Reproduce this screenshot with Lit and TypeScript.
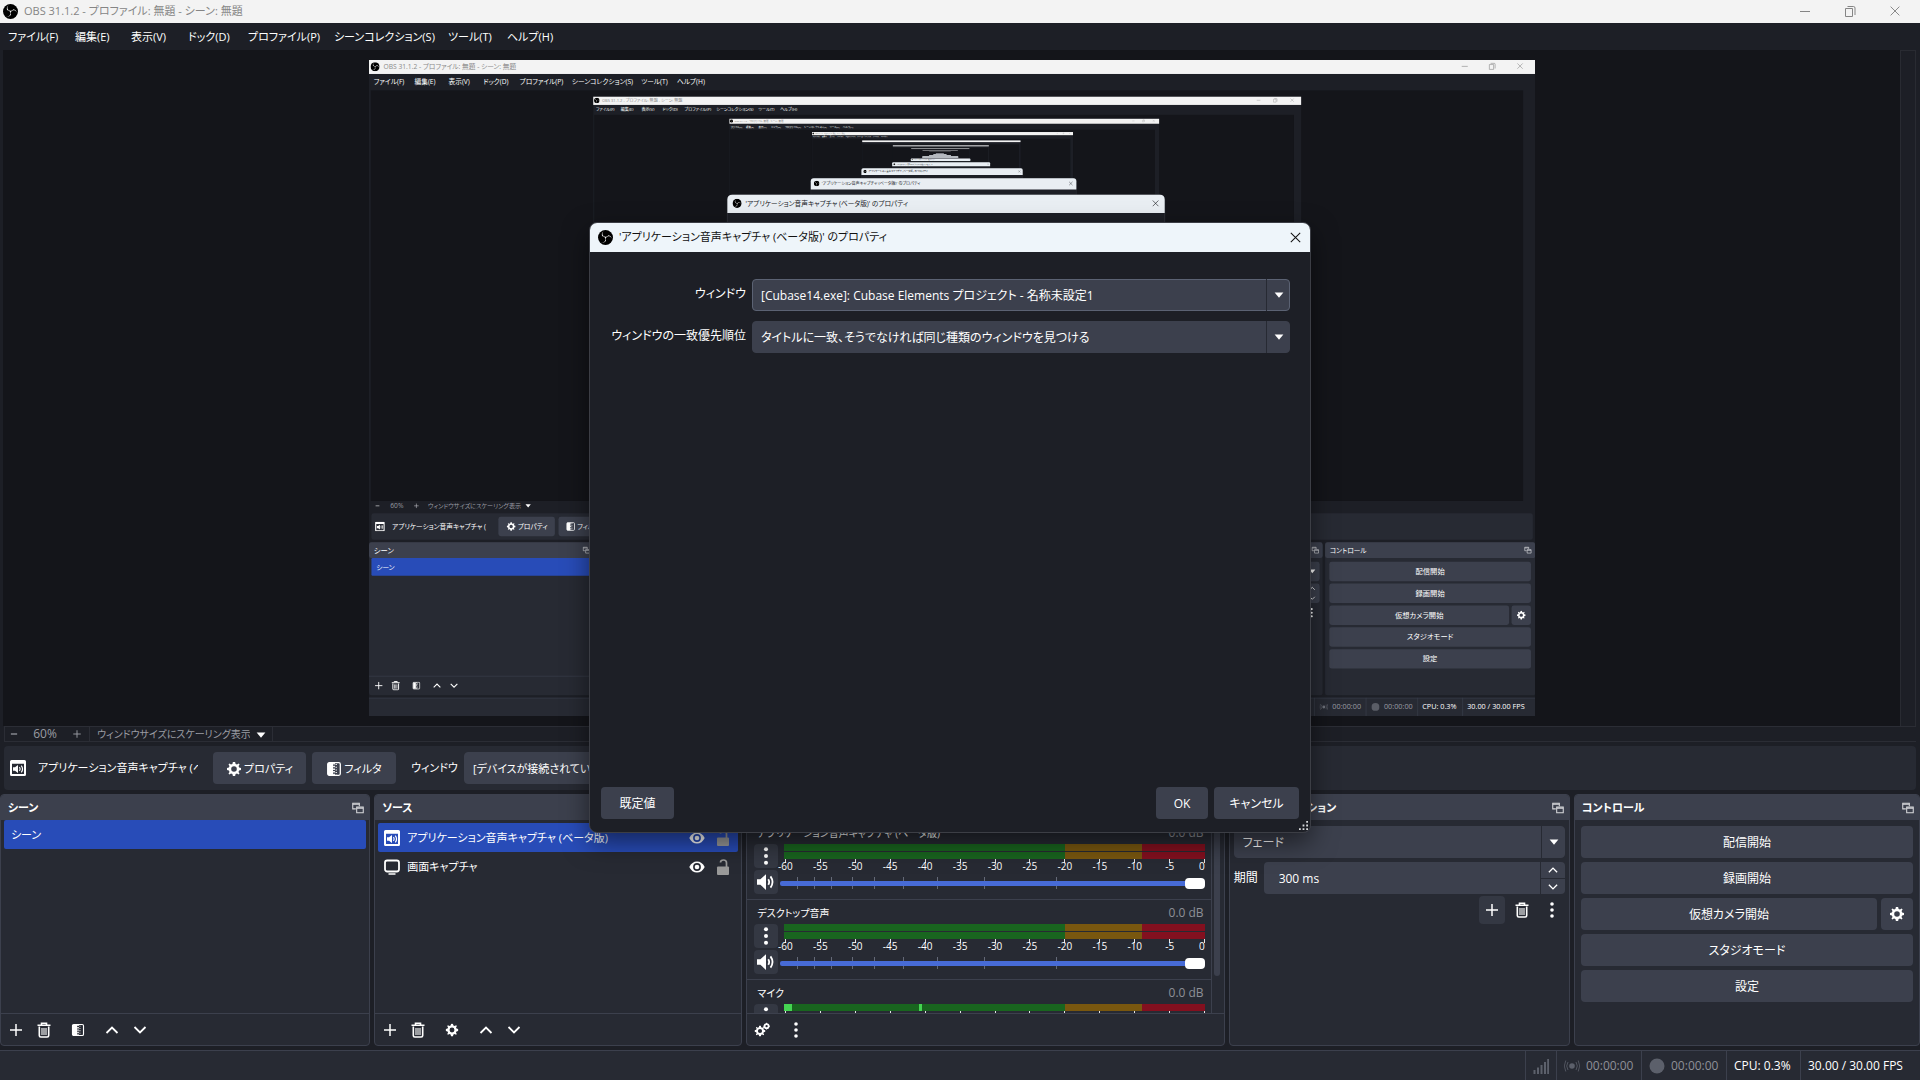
import { LitElement, html, svg, css, nothing } from "lit";
import { customElement, property } from "lit/decorators.js";

const APP_TITLE = "OBS 31.1.2 - プロファイル: 無題 - シーン: 無題";
const DIALOG_TITLE = "'アプリケーション音声キャプチャ (ベータ版)' のプロパティ";
const SOURCE_NAME = "アプリケーション音声キャプチャ (ベータ版)";

/** Menu labels, with the x position and width each one has on the bar. */
const MENUS: [string, number, number][] = [
  ["ファイル(F)", 8, 67],
  ["編集(E)", 75, 56],
  ["表示(V)", 131, 57],
  ["ドック(D)", 188, 60],
  ["プロファイル(P)", 248, 86],
  ["シーンコレクション(S)", 334, 114],
  ["ツール(T)", 448, 59],
  ["ヘルプ(H)", 507, 60],
];

const GEAR =
  "M8 0.9 9.1 1 9.6 2.9 11 3.5 12.7 2.5 13.6 3.4 12.6 5.1 13.1 6.4 15 6.9 15 9.1 13.1 9.6 12.5 11 13.5 12.6 12.6 13.5 11 12.5 9.6 13.1 9.1 15 6.9 15 6.4 13.1 5 12.5 3.4 13.5 2.5 12.6 3.5 11 2.9 9.6 1 9.1 1 6.9 2.9 6.4 3.5 5 2.5 3.4 3.4 2.5 5 3.5 6.4 2.9 6.9 1ZM8 5.2A2.8 2.8 0 1 0 8 10.8 2.8 2.8 0 1 0 8 5.2Z";

const ICONS: Record<string, unknown> = {
  logo: svg`<circle cx="8" cy="8" r="8" fill="#000"/><path fill="#f4f4f4" transform="scale(.6667)" d="M6.182,5.99c0.352-1.698,1.503-3.229,3.05-3.996c-0.269,0.273-0.595,0.483-0.844,0.78c-1.02,1.1-1.48,2.692-1.199,4.156c0.355,2.235,2.455,4.06,4.732,4.028c1.765,0.079,3.485-0.937,4.348-2.468c1.848,0.063,3.645,1.017,4.7,2.548c0.54,0.799,0.962,1.736,0.991,2.711c-0.342-1.295-1.202-2.446-2.375-3.095c-1.135-0.639-2.529-0.802-3.772-0.425c-1.56,0.448-2.849,1.723-3.293,3.293c-0.377,1.25-0.216,2.628,0.377,3.772c-0.825,1.429-2.315,2.449-3.932,2.756c-1.244,0.261-2.551,0.059-3.709-0.464c1.036,0.302,2.161,0.355,3.191-0.011c1.381-0.457,2.522-1.567,3.024-2.935c0.556-1.49,0.345-3.261-0.591-4.54c-0.7-1.007-1.803-1.717-3.002-1.969c-0.38-0.068-0.764-0.098-1.148-0.134c-0.611-1.231-0.834-2.66-0.528-3.996z"/>`,
  minimize: svg`<path d="M3 8.5H13" fill="none" stroke="currentColor"/>`,
  restore: svg`<path d="M3.5 5.5h7v8h-7zM5.500 3.500h6q1.500 0 1.500 1.500v7" fill="none" stroke="currentColor"/>`,
  close: svg`<path d="M3 3 13 13M13 3 3 13" fill="none" stroke="currentColor" stroke-width="1.1"/>`,
  gear: svg`<path fill="currentColor" fill-rule="evenodd" d="${GEAR}"/>`,
  gears: svg`<svg x="0" y="3" width="12" height="12" viewBox="0 0 16 16"><path fill="currentColor" fill-rule="evenodd" d="${GEAR}"/></svg><circle cx="12.600" cy="4.200" r="2" fill="none" stroke="currentColor" stroke-width="1.700"/><path d="M12.600 0.800v1.400M12.600 6.200v1.400M9.200 4.200h1.400M14.600 4.200H16" stroke="currentColor"/>`,
  filter: svg`<rect x="1.700" y="1.700" width="12.600" height="12.600" rx="1.500" fill="none" stroke="currentColor" stroke-width="1.300"/><path d="M2 2h5v12H2z" fill="currentColor"/><path d="M8 2v12" stroke="currentColor" stroke-width="1.800" stroke-dasharray="1.500 1.200"/><path d="M10.200 3v11" stroke="currentColor" stroke-width="1.300" stroke-dasharray="1 1.700"/>`,
  plus: svg`<path d="M8 2V14M2 8H14" fill="none" stroke="currentColor" stroke-width="1.500"/>`,
  minus: svg`<path d="M3 8H13" fill="none" stroke="currentColor" stroke-width="2"/>`,
  trash: svg`<path d="M5.500 2.500V1.300h5v1.200M1.500 3.200h13" fill="none" stroke="currentColor" stroke-width="1.600"/><path d="M3.300 4.500v9q0 1.500 1.500 1.500h6.400q1.500 0 1.500-1.500v-9" fill="none" stroke="currentColor" stroke-width="1.600"/><path d="M6 6v7M8 6v7M10 6v7" stroke="currentColor" stroke-width="1.100"/>`,
  up: svg`<path d="M2.500 11 8 5.500 13.500 11" fill="none" stroke="currentColor" stroke-width="1.800"/>`,
  down: svg`<path d="M2.500 5 8 10.500 13.500 5" fill="none" stroke="currentColor" stroke-width="1.800"/>`,
  dots: svg`<g fill="currentColor"><circle cx="8" cy="2" r="1.800"/><circle cx="8" cy="8" r="1.800"/><circle cx="8" cy="14" r="1.800"/></g>`,
  caret: svg`<path d="M3 5H13L8 11Z" fill="currentColor"/>`,
  float: svg`<g fill="none" stroke="currentColor" stroke-width="1.200"><path d="M5.500 9H2V2.500h7.500V6"/><path d="M2 3.800h7.500"/><path d="M6.500 7h7.500v6.500H6.500z"/><path d="M6.500 8.300h7.500"/></g>`,
  audioApp: svg`<path fill="currentColor" fill-rule="evenodd" d="M1.500 0h13Q16 0 16 1.500v13q0 1.500-1.500 1.500h-13Q0 16 0 14.500v-13Q0 0 1.500 0ZM2 3.800V14h12V3.800Z"/><path fill="currentColor" d="M3 7.300h2L8 5v8L5 10.700H3Z"/><path d="M9.500 7q1.400 2 0 4M11.300 5.600q2.500 3.400 0 6.800" fill="none" stroke="currentColor" stroke-width="1.200"/>`,
  monitor: svg`<rect x="1" y="1.500" width="14" height="11" rx="2.200" fill="none" stroke="currentColor" stroke-width="1.800"/><path d="M4.500 15h7" stroke="currentColor" stroke-width="1.500"/>`,
  eye: svg`<path fill="currentColor" fill-rule="evenodd" d="M0.300 8Q3 2.500 8 2.500T15.700 8Q13 13.500 8 13.500T0.300 8ZM8 4.100A3.900 3.900 0 1 0 8 11.900 3.900 3.900 0 1 0 8 4.100Z"/><circle cx="8" cy="8" r="2.300" fill="currentColor"/>`,
  lock: svg`<rect x="2" y="7.500" width="12" height="8.500" rx="1" fill="currentColor"/><path d="M5.500 3.500Q5.500 1 8.500 1T11.500 3.800V8" fill="none" stroke="currentColor" stroke-width="1.700"/>`,
  speaker: svg`<path fill="currentColor" d="M0 5.500h3L8 1v14L3 10.500H0Z"/><path d="M10 5.500q1.600 2.500 0 5M12 3q3.600 5 0 10" fill="none" stroke="currentColor" stroke-width="1.600"/>`,
  bars: svg`<path d="M0.500 12h2v4h-2zM4 9.500h2V16H4zM7.500 7h2v9h-2zM11 4h2v12h-2zM14.200 1h1.800v15h-1.800z" fill="currentColor"/>`,
  stream: svg`<circle cx="8" cy="8" r="2.800" fill="currentColor"/><path d="M4 4q-2.600 4 0 8M12 4q2.600 4 0 8M1.800 2.500q-3 5.500 0 11M14.200 2.500q3 5.500 0 11" fill="none" stroke="currentColor" stroke-width=".8"/>`,
  record: svg`<circle cx="8" cy="8" r="7.500" fill="currentColor"/>`,
  grip: svg`<path fill="currentColor" d="M12 0h3v3h-3zM12 6h3v3h-3zM12 12h3v3h-3zM6 6h3v3H6zM6 12h3v3H6zM0 12h3v3H0z"/>`,
};

const icon = (name: string, size = 16) =>
  html`<svg class="icon" width=${size} height=${size} viewBox="0 0 16 16" aria-hidden="true">${ICONS[name]}</svg>`;

/** The captured desktop: the application window seen inside its own preview, over and over. */
@customElement("obs-capture")
export class ObsCapture extends LitElement {
  static styles = css`
    :host { display: block; height: 100%; aspect-ratio: 16 / 9; }
    .frame { display: block; width: 100%; height: 100%; }
    text {
      font-family: "Open Sans", "Noto Sans CJK JP", sans-serif;
      font-feature-settings: "palt";
      font-size: 12px;
      fill: #fff;
    }
    .s { font-size: 11px; }
    .xs { font-size: 10px; }
    .caption { fill: #8a8a8a; }
    .ink { fill: #16181c; }
    .dim { fill: #9a9ca3; }
    .mid { text-anchor: middle; }
  `;

  private glyph(name: string, cx: number, cy: number, color = "#fff", size = 16) {
    return svg`<svg x=${cx - size / 2} y=${cy - size / 2} width=${size} height=${size} viewBox="0 0 16 16" color=${color}>${ICONS[name]}</svg>`;
  }

  private label(text: string, x: number, cy: number, cls = "") {
    return svg`<text class=${cls} x=${x} y=${cy + 4}>${text}</text>`;
  }

  private box(x: number, y: number, w: number, h: number, fill = "#3c404d", rx = 4) {
    return svg`<rect x=${x} y=${y} width=${w} height=${h} rx=${rx} fill=${fill}/>`;
  }

  private lowerPart() {
    const rows = ["配信開始", "録画開始", "仮想カメラ開始", "スタジオモード", "設定"];
    return svg`
      ${this.glyph("minus", 14, 734, "#c4c5c9", 10)}${this.label("60%", 35, 734, "dim s")}
      ${this.glyph("plus", 78, 734, "#c4c5c9", 10)}${this.label("ウィンドウサイズにスケーリング表示", 97, 734, "dim xs")}
      ${this.glyph("caret", 262, 734, "#fff", 14)}
      ${this.box(4, 746, 1912, 44, "#272a33")}
      ${this.glyph("audioApp", 18, 768)}${this.label("アプリケーション音声キャプチャ (", 38, 768, "s")}
      ${this.box(213, 752, 93, 32)}${this.glyph("gear", 234, 768)}${this.label("プロパティ", 245, 768, "s")}
      ${this.box(312, 752, 84, 32)}${this.glyph("filter", 332, 768)}${this.label("フィルタ", 343, 768, "s")}
      ${this.box(0, 794, 370, 252, "#272a33")}${this.box(0, 794, 370, 26)}
      ${this.label("シーン", 8, 807)}${this.glyph("float", 358, 807, "#d8d9dc", 14)}
      ${this.box(4, 820, 362, 29, "#284cb8", 2)}${this.label("シーン", 12, 835, "s")}
      <path d="M0 1014.500H370" stroke="#3c404d"/>
      ${this.glyph("plus", 16, 1030)}${this.glyph("trash", 44, 1030)}${this.glyph("filter", 78, 1030, "#fff", 14)}
      ${this.glyph("up", 112, 1030)}${this.glyph("down", 140, 1030)}
      ${this.box(1229, 794, 341, 252, "#272a33")}${this.box(1229, 794, 341, 26)}
      ${this.glyph("float", 1558, 807, "#d8d9dc", 14)}
      ${this.box(1234, 826, 331, 32)}${this.glyph("caret", 1553, 842)}
      ${this.box(1264, 862, 301, 32)}${this.glyph("up", 1553, 870, "#fff", 12)}${this.glyph("down", 1553, 886, "#fff", 12)}
      ${this.glyph("dots", 1552, 910)}
      ${this.box(1574, 794, 346, 252, "#272a33")}${this.box(1574, 794, 346, 26)}
      ${this.label("コントロール", 1582, 807, "s")}${this.glyph("float", 1908, 807, "#d8d9dc", 14)}
      ${rows.map((t, i) => svg`${this.box(1581, 826 + i * 36, i === 2 ? 296 : 332, 32)}${this.label(t, i === 2 ? 1729 : 1747, 842 + i * 36, "mid")}`)}
      ${this.box(1881, 898, 32, 32)}${this.glyph("gear", 1897, 914)}
      <rect y="1050" width="1920" height="30" fill="#272a33"/>
      <path d="M0 1050.500H1920M1556.500 1050V1080M1641.500 1050V1080M1726.500 1050V1080M1800.500 1050V1080" stroke="#3c404d" fill="none"/>
      ${this.glyph("stream", 1572, 1065, "#6f727b", 14)}${this.label("00:00:00", 1586, 1065, "dim")}
      ${this.glyph("record", 1657, 1065, "#5a5d66", 14)}${this.label("00:00:00", 1671, 1065, "dim")}
      ${this.label("CPU: 0.3%", 1734, 1065)}${this.label("30.00 / 30.00 FPS", 1808, 1065)}
    `;
  }

  private desktop(level: number): unknown {
    if (level > 9) return nothing;
    return svg`
      <rect width="1920" height="1080" fill="#1d1f26"/>
      <rect width="1920" height="23" fill="#f3f3f3"/>
      <rect x="3" y="50" width="1897" height="676" fill="#14151a"/>
      ${level < 5
        ? svg`${this.glyph("logo", 10, 11, "#000", 15)}${this.label(APP_TITLE, 24, 11, "caption s")}
          ${this.glyph("minimize", 1804, 10, "#8a8a8a")}${this.glyph("restore", 1849, 10, "#8a8a8a")}${this.glyph("close", 1895, 10, "#8a8a8a", 14)}
          ${MENUS.map(([t, x]) => this.label(t, x, 36, "s"))}`
        : nothing}
      ${level === 1 ? this.lowerPart() : nothing}
      <svg x="369" y="60" width="1166" height="656" viewBox="0 0 1920 1080" preserveAspectRatio="none">${this.desktop(level + 1)}</svg>
      <rect x="590" y="222" width="720" height="610" rx="8" fill="#1d1f26" stroke="#3a3d45"/>
      <path d="M590 252v-22q0-8 8-8h704q8 0 8 8v22z" fill="#e9eef3"/>
      ${level < 6
        ? svg`${this.glyph("logo", 606, 236, "#000", 15)}${this.label(DIALOG_TITLE, 620, 236, "ink s")}${this.glyph("close", 1295, 236, "#16181c", 15)}`
        : nothing}
    `;
  }

  render() {
    return html`<svg class="frame" viewBox="0 0 1920 1080" role="img" aria-label="プレビュー">${this.desktop(1)}</svg>`;
  }
}

const DB = [-60, -55, -50, -45, -40, -35, -30, -25, -20, -15, -10, -5, 0];
const FADER_MARKS = [4, 8, 12, 17, 22, 29, 37, 48, 65];

@customElement("obs-channel")
export class ObsChannel extends LitElement {
  @property() name = "";
  @property({ type: Number }) meters = 2;
  @property({ type: Boolean }) live = false;

  static styles = css`
    :host { display: block; border-bottom: 1px solid #3c404d; padding: 3px 6px 4px 7px; }
    * { box-sizing: border-box; }
    .head { display: flex; justify-content: space-between; padding: 0 1px 0 3px; margin-bottom: 1px; line-height: 20px; }
    .name { font-size: 10px; }
    .db { color: #8e9097; font-size: 12px; }
    .body { display: grid; grid-template-columns: 24px minmax(0, 1fr); column-gap: 2px; }
    .btn {
      height: 24px; padding: 0; border: 0; border-radius: 4px; background: #343843; color: #fff;
      display: flex; align-items: center; justify-content: center;
    }
    .mute { margin-top: 2px; }
    .icon { display: block; }
    .meter-wrap { height: 24px; padding-left: 4px; }
    .meter { position: relative; height: 7px; margin-bottom: 1px;
      background: linear-gradient(90deg, #19651f 0 66.7%, #79570f 66.7% 85%, #83101f 85%); }
    .level, .peak { position: absolute; top: 0; height: 7px; background: #45d452; }
    .level { left: 0; width: 8px; }
    .peak { left: 32%; width: 3px; }
    .scale { display: flex; justify-content: space-between; height: 12px; padding: 0 0 0 1px; margin-top: -1px; }
    .mark { width: 0; display: flex; flex-direction: column; align-items: center; font-size: 10px; line-height: 10px; }
    .mark::before { content: ""; flex: none; width: 1px; height: 4px; background: #e4e4e6; margin-bottom: -2px; }
    .mark:last-child { align-items: flex-end; }
    .fader { position: relative; height: 24px; margin-top: 3px; display: flex; align-items: center; }
    .notch { position: absolute; top: 6px; width: 1px; height: 12px; background: #646977; }
    .range { position: relative; appearance: none; width: 100%; height: 24px; margin: 0; background: none; }
    .range::-webkit-slider-runnable-track { height: 5px; border-radius: 2px; background: #476bd7; }
    .range::-webkit-slider-thumb { appearance: none; width: 20px; height: 11px; margin-top: -3px; border-radius: 4px; background: #fff; }
  `;

  render() {
    return html`
      <div class="head"><span class="name">${this.name}</span><span class="db">0.0 dB</span></div>
      <div class="body">
        <button class="btn" aria-label="メニュー">${icon("dots", 18)}</button>
        <div class="meter-wrap">
          ${Array.from({ length: this.meters }, () => html`<div class="meter">
            ${this.live ? html`<span class="level"></span><span class="peak"></span>` : nothing}
          </div>`)}
          <div class="scale">${DB.map((d) => html`<span class="mark">${d}</span>`)}</div>
        </div>
        <button class="btn mute" aria-label="ミュート">${icon("speaker", 18)}</button>
        <div class="fader">
          ${FADER_MARKS.map((m) => html`<span class="notch" style="left:${m}%"></span>`)}
          <input class="range" type="range" min="0" max="100" .value=${"100"} aria-label=${this.name} />
        </div>
      </div>
    `;
  }
}

@customElement("app-root")
export class AppRoot extends LitElement {
  static styles = css`
    :host {
      display: block; position: relative; height: 100vh; overflow: hidden;
      background: #1d1f26; color: #fff;
      font: 12px/18px "Open Sans", "Noto Sans CJK JP", sans-serif;
      font-feature-settings: "palt";
    }
    * { box-sizing: border-box; }
    button, select, input { font: inherit; font-feature-settings: inherit; color: inherit; margin: 0; }
    button { border: 0; padding: 0; background: none; display: flex; align-items: center; justify-content: center; }
    .icon { display: block; flex: none; }
    .app { display: flex; flex-direction: column; height: 100%; }

    .titlebar { display: flex; align-items: center; height: 23px; padding: 0 9px 1px 3px; gap: 6px; background: #f3f3f3; color: #858585; font-size: 11px; }
    .titlebar .name { flex: 1; }
    .titlebar .tool { width: 32px; height: 18px; margin-left: 7px; }

    .menus { display: flex; height: 27px; padding: 0 8px; font-size: 11px; }
    .menus .item { justify-content: flex-start; white-space: nowrap; }

    .stage { flex: 1; min-height: 0; display: flex; padding: 0 4px 0 3px; }
    .canvas { flex: 1; min-width: 0; display: flex; justify-content: center; padding: 10px 0 10px 1px; background: #14151a; }
    .gutter { width: 16px; border: 1px solid #292b32; border-bottom: 0; }

    .zoombar { display: flex; align-items: center; height: 16px; margin: 0 4px 4px; border: 1px solid #2b2d35; border-width: 1px 0 1px 1px; color: #9a9ca3; line-height: 16px; }
    .zoombar .step { width: 18px; }
    .zoombar .value { width: 44px; text-align: center; }
    .zoombar .plus { width: 20px; margin-right: 2px; }
    .scaling { position: relative; display: flex; align-items: center; width: 184px; height: 14px; border: 1px solid #2b2d35; border-width: 0 1px; }
    .scaling select { appearance: none; width: 100%; height: 14px; padding: 0 22px 0 7px; border: 0; background: none; font-size: 10px; line-height: 14px; }
    .scaling .icon { position: absolute; right: 4px; top: 1px; color: #fff; pointer-events: none; }

    .context { display: flex; align-items: center; height: 44px; margin: 0 4px 4px; padding: 0 6px; border-radius: 4px; background: #272a33; font-size: 11px; }
    .context .source { width: 160px; margin: 0 15px 0 12px; overflow: hidden; white-space: nowrap; }
    .btn { height: 32px; padding: 1px 12px 0; border-radius: 4px; background: #3c404d; gap: 2px; white-space: nowrap; }
    .context .btn { margin-right: 6px; }
    .context .props { width: 93px; }
    .context .filters { width: 84px; }
    .context label { width: 53px; margin-left: 9px; white-space: nowrap; }
    .context .pick { flex: 0 1 640px; }

    .pick { position: relative; display: flex; min-width: 0; }
    .pick select { appearance: none; width: 100%; height: 32px; padding: 1px 32px 0 8px; border: 1px solid #3c404d; border-radius: 4px; background: #3c404d; }
    .pick::after { content: ""; position: absolute; right: 23px; top: 0; bottom: 0; width: 1px; background: #272a33; }
    .pick .icon { position: absolute; right: 4px; top: 9px; pointer-events: none; }
    .pick.focus select { border-color: #5b6273; }

    .docks { display: grid; grid-template-columns: 370fr 368fr 478fr 341fr 346fr; gap: 4px; height: 252px; }
    .dock { display: flex; flex-direction: column; min-width: 0; border: 1px solid #3c404d; border-radius: 4px; background: #272a33; overflow: hidden; }
    .dock h2 { display: flex; align-items: center; justify-content: space-between; height: 25px; margin: 0; padding: 0 4px 0 7px; background: #3c404d; font: inherit; font-size: 11px; font-weight: 600; flex: none; }
    .dock h2 .icon { color: #d8d9dc; }
    .list { flex: 1; min-height: 0; margin: 0; padding: 0 3px; list-style: none; font-size: 11px; }
    .row { display: flex; align-items: center; height: 29px; padding: 1px 7px 0; border-radius: 2px; }
    .sources .row { padding: 1px 7px 0 6px; }
    .sources { padding-top: 3px; }
    .row.on { background: #284cb8; }
    .row .grow { flex: 1; white-space: nowrap; margin-left: 7px; }
    .row .lock { color: #9a9a9a; margin-left: 10px; }
    .tools { display: flex; align-items: center; height: 32px; padding: 0 1px; border-top: 1px solid #3c404d; flex: none; }
    .tools button { width: 28px; height: 28px; }
    .tools button.wide { width: 40px; }
    .mixer { flex: 1; min-height: 0; display: flex; overflow: hidden; }
    .channels { flex: 1; min-width: 0; border-right: 1px solid #3c404d; }
    .thumb { width: 6px; height: 156px; margin: 0 4px 0 2px; border-radius: 3px; background: #3c404d; }

    .form { display: flex; flex-direction: column; gap: 4px; padding: 6px 4px; }
    .duration { display: grid; grid-template-columns: 26px minmax(0, 1fr); align-items: center; gap: 4px; }
    .spin { position: relative; display: grid; grid-template-columns: minmax(0, 1fr) 24px; height: 32px; border-radius: 4px; background: #3c404d; }
    .spin input { min-width: 0; border: 0; background: none; padding: 1px 15px 0; border-right: 1px solid #272a33; }
    .spin .arrows { display: grid; grid-template-rows: 1fr 1fr; }
    .spin .arrows button + button { border-top: 1px solid #272a33; }
    .actions { display: flex; justify-content: flex-end; gap: 4px; margin-top: -2px; }
    .actions button { width: 26px; height: 28px; border-radius: 4px; }
    .actions .hot { background: #343843; }
    .controls { display: flex; flex-direction: column; gap: 4px; padding: 6px; }
    .controls .pair { display: grid; grid-template-columns: minmax(0, 1fr) 32px; gap: 4px; }
    .controls .pair .gear { padding: 0; }

    .status { display: flex; justify-content: flex-end; height: 30px; margin-top: 4px; border-top: 1px solid #3c404d; background: #272a33; }
    .status .cell { display: flex; align-items: center; gap: 6px; padding: 0 0 0 7px; border-left: 1px solid #3c404d; white-space: nowrap; }
    .status .signal { min-width: 31px; }
    .status .time { min-width: 85px; }
    .status .cpu { min-width: 74px; }
    .status .fps { min-width: 120px; }
    .status .off { color: #8e9097; }
    .status .off .icon { color: #5c606b; }

    .dialog { position: absolute; left: 589px; top: 222px; width: 722px; height: 611px; display: flex; flex-direction: column; border: 1px solid #3c3e45; border-radius: 8px; overflow: hidden; background: #1d1f26; }
    .shadow { position: absolute; left: 589px; top: 222px; width: 722px; height: 611px; border-radius: 8px; box-shadow: 0 10px 26px rgba(0, 0, 0, 0.5); }
    .dialog header { display: flex; align-items: center; height: 29px; padding: 0 6px 1px 8px; gap: 6px; background: #eef5fa; color: #111; font-size: 11px; flex: none; }
    .dialog header .name { flex: 1; }
    .dialog header button { width: 18px; height: 18px; }
    .fields { flex: 1; display: grid; grid-template-columns: 144px minmax(0, 1fr); column-gap: 6px; row-gap: 10px; align-content: start; padding: 27px 20px 0 12px; }
    .fields label { text-align: right; line-height: 30px; white-space: nowrap; }
    .buttons { display: flex; gap: 6px; padding: 0 11px 13px; }
    .buttons .btn { min-width: 52px; }
    .buttons .reset { width: 73px; margin-right: auto; }
    .buttons .cancel { width: 85px; }
    .grip { position: absolute; right: 2px; bottom: 2px; color: #d8d9dc; }
  `;

  private dockTitle(text: string) {
    return html`<h2><span>${text}</span>${icon("float", 14)}</h2>`;
  }

  render() {
    return html`
      <div class="app">
        <header class="titlebar">
          ${icon("logo", 15)}<span class="name">${APP_TITLE}</span>
          <button class="tool" aria-label="最小化">${icon("minimize")}</button>
          <button class="tool" aria-label="元に戻す">${icon("restore")}</button>
          <button class="tool" aria-label="閉じる">${icon("close", 14)}</button>
        </header>
        <nav class="menus">
          ${MENUS.map(([t, , w]) => html`<button class="item" style="width:${w}px">${t}</button>`)}
        </nav>
        <main class="stage">
          <div class="canvas"><obs-capture></obs-capture></div>
          <div class="gutter"></div>
        </main>
        <div class="zoombar">
          <button class="step" aria-label="縮小">${icon("minus", 10)}</button>
          <span class="value">60%</span>
          <button class="plus" aria-label="拡大">${icon("plus", 10)}</button>
          <div class="scaling">
            <select aria-label="表示倍率"><option>ウィンドウサイズにスケーリング表示</option></select>
            ${icon("caret", 14)}
          </div>
        </div>
        <section class="context">
          ${icon("audioApp")}<span class="source">${SOURCE_NAME}</span>
          <button class="btn props">${icon("gear")}プロパティ</button>
          <button class="btn filters">${icon("filter")}フィルタ</button>
          <label for="device">ウィンドウ</label>
          <div class="pick"><select id="device"><option>[デバイスが接続されていません]</option></select></div>
        </section>
        <div class="docks">
          <section class="dock">
            ${this.dockTitle("シーン")}
            <ul class="list"><li class="row on">シーン</li></ul>
            <div class="tools">
              <button aria-label="追加">${icon("plus")}</button>
              <button aria-label="削除">${icon("trash")}</button>
              <button class="wide" aria-label="フィルタ">${icon("filter", 14)}</button>
              <button aria-label="上へ">${icon("up")}</button>
              <button aria-label="下へ">${icon("down")}</button>
            </div>
          </section>
          <section class="dock">
            ${this.dockTitle("ソース")}
            <ul class="list sources">
              <li class="row on">${icon("audioApp")}<span class="grow">${SOURCE_NAME}</span>${icon("eye")}<span class="lock">${icon("lock")}</span></li>
              <li class="row">${icon("monitor")}<span class="grow">画面キャプチャ</span>${icon("eye")}<span class="lock">${icon("lock")}</span></li>
            </ul>
            <div class="tools">
              <button aria-label="追加">${icon("plus")}</button>
              <button aria-label="削除">${icon("trash")}</button>
              <button class="wide" aria-label="プロパティ">${icon("gear", 14)}</button>
              <button aria-label="上へ">${icon("up")}</button>
              <button aria-label="下へ">${icon("down")}</button>
            </div>
          </section>
          <section class="dock">
            ${this.dockTitle("音声ミキサー")}
            <div class="mixer">
              <div class="channels">
                <obs-channel name=${SOURCE_NAME}></obs-channel>
                <obs-channel name="デスクトップ音声"></obs-channel>
                <obs-channel name="マイク" meters="1" live></obs-channel>
              </div>
              <div class="thumb"></div>
            </div>
            <div class="tools">
              <button aria-label="オーディオの詳細">${icon("gears")}</button>
              <button class="wide" aria-label="メニュー">${icon("dots")}</button>
            </div>
          </section>
          <section class="dock">
            ${this.dockTitle("シーントランジション")}
            <div class="form">
              <div class="pick"><select aria-label="トランジション"><option>フェード</option></select>${icon("caret", 14)}</div>
              <div class="duration">
                <label for="ms">期間</label>
                <div class="spin">
                  <input id="ms" type="text" .value=${"300 ms"} />
                  <span class="arrows">
                    <button aria-label="増やす">${icon("up", 12)}</button>
                    <button aria-label="減らす">${icon("down", 12)}</button>
                  </span>
                </div>
              </div>
              <div class="actions">
                <button class="hot" aria-label="追加">${icon("plus")}</button>
                <button aria-label="削除">${icon("trash")}</button>
                <button aria-label="メニュー">${icon("dots")}</button>
              </div>
            </div>
          </section>
          <section class="dock">
            ${this.dockTitle("コントロール")}
            <div class="controls">
              <button class="btn">配信開始</button>
              <button class="btn">録画開始</button>
              <div class="pair">
                <button class="btn">仮想カメラ開始</button>
                <button class="btn gear" aria-label="仮想カメラの設定">${icon("gear")}</button>
              </div>
              <button class="btn">スタジオモード</button>
              <button class="btn">設定</button>
            </div>
          </section>
        </div>
        <footer class="status">
          <span class="cell off signal">${icon("bars")}</span>
          <span class="cell off time">${icon("stream")}00:00:00</span>
          <span class="cell off time">${icon("record")}00:00:00</span>
          <span class="cell cpu">CPU: 0.3%</span>
          <span class="cell fps">30.00 / 30.00 FPS</span>
        </footer>
      </div>
      <div class="shadow"></div>
      <section class="dialog" role="dialog" aria-label=${DIALOG_TITLE}>
        <header>
          ${icon("logo", 15)}<span class="name">${DIALOG_TITLE}</span>
          <button aria-label="閉じる">${icon("close", 15)}</button>
        </header>
        <div class="fields">
          <label for="win">ウィンドウ</label>
          <div class="pick focus"><select id="win"><option>[Cubase14.exe]: Cubase Elements プロジェクト - 名称未設定1</option></select>${icon("caret", 14)}</div>
          <label for="prio">ウィンドウの一致優先順位</label>
          <div class="pick"><select id="prio"><option>タイトルに一致、そうでなければ同じ種類のウィンドウを見つける</option></select>${icon("caret", 14)}</div>
        </div>
        <div class="buttons">
          <button class="btn reset">既定値</button>
          <button class="btn">OK</button>
          <button class="btn cancel">キャンセル</button>
        </div>
        <svg class="grip" width="9" height="9" viewBox="0 0 15 15" aria-hidden="true">${ICONS.grip}</svg>
      </section>
    `;
  }
}
